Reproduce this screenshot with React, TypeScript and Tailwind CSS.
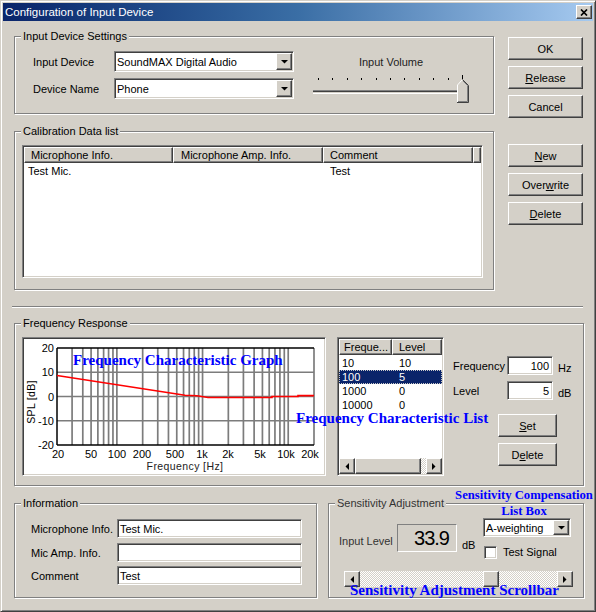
import type { ReactNode } from "react";

const raised =
  "border border-t-white border-l-white border-r-[#404040] border-b-[#404040] shadow-[inset_-1px_-1px_0_#808080]";
const sunken =
  "border border-t-[#808080] border-l-[#808080] border-r-white border-b-white shadow-[inset_1px_1px_0_#404040,inset_-1px_-1px_0_#d4d0c8]";
const etched = "m-0 min-w-0 p-0 border border-[#808080] shadow-[1px_1px_0_#fff,inset_1px_1px_0_#fff]";
const dither =
  "bg-[image:repeating-conic-gradient(#ffffff_0%_25%,#d4d0c8_0%_50%)] bg-[length:2px_2px]";

function Legend({ children }: { children: ReactNode }) {
  return <legend className="ml-[6px] h-[14px] bg-[#d4d0c8] px-[2px] leading-[14px]">{children}</legend>;
}

function Btn({ children, className = "" }: { children: ReactNode; className?: string }) {
  return (
    <button
      type="button"
      className={`flex h-[23px] items-center justify-center bg-[#d4d0c8] ${raised} ${className}`}
    >
      {children}
    </button>
  );
}

function DownArrow() {
  return (
    <svg width="7" height="4" viewBox="0 0 7 4">
      <polygon points="0,0 7,0 3.5,3.5" fill="#000" />
    </svg>
  );
}

function Combo({ value, className = "" }: { value: string; className?: string }) {
  return (
    <div className={`flex items-center bg-white p-px ${sunken} ${className}`}>
      <span className="flex-1 truncate pl-[1px]">{value}</span>
      <span className={`flex h-full w-[16px] items-center justify-center bg-[#d4d0c8] ${raised}`}>
        <DownArrow />
      </span>
    </div>
  );
}

function ArrowBtn({ dir }: { dir: "left" | "right" }) {
  return (
    <span className={`flex h-full w-[16px] shrink-0 items-center justify-center bg-[#d4d0c8] ${raised}`}>
      <svg width="4" height="7" viewBox="0 0 4 7">
        <polygon points={dir === "left" ? "4,0 4,7 0.5,3.5" : "0,0 0,7 3.5,3.5"} fill="#000" />
      </svg>
    </span>
  );
}

function Field({ value, className = "", right = false }: { value: string; className?: string; right?: boolean }) {
  return (
    <div
      className={`flex h-[19px] items-center bg-white px-[2px] ${sunken} ${right ? "justify-end pr-[3px]" : ""} ${className}`}
    >
      {value}
    </div>
  );
}

const FX = (f: number) => 33 + Math.log10(f / 20) * (257 / 3);
const GY = (db: number) => 9 + (20 - db) * (97 / 40);

const gridFreqs = [
  30, 40, 50, 60, 70, 80, 90, 100, 200, 300, 400, 500, 600, 700, 800, 900, 1000, 2000, 3000, 4000, 5000,
  6000, 7000, 8000, 9000, 10000, 20000,
];

const xLabels: [number, string][] = [
  [34, "20"],
  [67, "50"],
  [93, "100"],
  [118, "200"],
  [151, "500"],
  [178, "1k"],
  [204, "2k"],
  [236, "5k"],
  [262, "10k"],
  [286, "20k"],
];

function Graph() {
  const curve = "33,36.5 161,56.3 173,56.8 184,58.5 248,58.5 248,57.5 274,57.5 274,56.6 290,56.6";
  return (
    <svg width="300" height="135" viewBox="0 0 300 135" className="font-['Liberation_Sans',Arial,sans-serif]">
      {gridFreqs.map((f) => (
        <line key={f} x1={FX(f)} x2={FX(f)} y1={9} y2={106} stroke="#7c7c7c" strokeWidth={1.7} />
      ))}
      {[10, 0, -10].map((d) => (
        <line key={d} x1={33} x2={290} y1={GY(d)} y2={GY(d)} stroke="#7c7c7c" strokeWidth={1.6} />
      ))}
      <line x1={33} x2={290} y1={9} y2={9} stroke="#000" strokeWidth={1.5} />
      <line x1={33} x2={290} y1={106} y2={106} stroke="#000" strokeWidth={1.5} />
      <line x1={33} x2={33} y1={9} y2={106} stroke="#000" strokeWidth={1.5} />
      <polyline points={curve} fill="none" stroke="#ff0000" strokeWidth={1.6} />
      {[20, 10, 0, -10, -20].map((d) => (
        <text key={d} x={30} y={GY(d) + 4} fontSize="11" textAnchor="end" fill="#000">
          {d}
        </text>
      ))}
      {xLabels.map(([x, t]) => (
        <text key={t} x={x} y={119} fontSize="11" textAnchor="middle" fill="#000">
          {t}
        </text>
      ))}
      <text x={161} y={131} fontSize="10.5" textAnchor="middle" fill="#222" letterSpacing="0.4">
        Frequency [Hz]
      </text>
      <text
        x={11}
        y={63}
        fontSize="10.5"
        textAnchor="middle"
        fill="#000"
        letterSpacing="0.3"
        transform="rotate(-90 11 63)"
      >
        SPL [dB]
      </text>
    </svg>
  );
}

function VolumeSlider() {
  const ticks = Array.from({ length: 11 }, (_, i) => Math.round(5 + i * 14.4));
  return (
    <svg width="156" height="28" viewBox="0 0 156 28">
      {ticks.map((x, i) => (
        <rect key={x} x={x} y={i === 10 ? 0 : 3} width={1} height={i === 10 ? 5 : 2} fill="#000" />
      ))}
      <rect x={0} y={15} width={153} height={1} fill="#808080" />
      <rect x={0} y={16} width={153} height={1} fill="#404040" />
      <rect x={0} y={18} width={153} height={1} fill="#ffffff" />
      <polygon points="144,10 149.5,4 155,10 155,27 144,27" fill="#d4d0c8" />
      <polyline points="144.5,27 144.5,10 149.5,4.5" fill="none" stroke="#fff" strokeWidth={1} />
      <polyline points="149.5,4.5 155.5,10.5 155.5,27.5 144,27.5" fill="none" stroke="#404040" strokeWidth={1} />
      <polyline points="150,6 154.5,10.5 154.5,26.5 145,26.5" fill="none" stroke="#808080" strokeWidth={1} />
    </svg>
  );
}

function CloseGlyph() {
  return (
    <svg width="8" height="7" viewBox="0 0 8 7">
      <path d="M1 0.5 L7 6.5 M7 0.5 L1 6.5" stroke="#000" strokeWidth={1.7} />
    </svg>
  );
}

export default function App() {
  return (
    <div className="relative h-[612px] w-[596px] border border-t-[#d4d0c8] border-l-[#d4d0c8] border-r-[#404040] border-b-[#404040] bg-[#d4d0c8] p-[2px] font-['Liberation_Sans',Arial,sans-serif] text-[11px] leading-[14px] text-black shadow-[inset_1px_1px_0_#fff,inset_-1px_-1px_0_#808080]">
      {/* TITLE BAR */}
      <div className="flex h-[18px] items-center justify-between bg-linear-to-r from-[#0a246a] via-[#3a6ea5] to-[#a6caf0] pl-[2px] pr-[1px]">
        <span className="text-[11.5px] text-white">Configuration of Input Device</span>
        <span className={`flex h-[14px] w-[16px] items-center justify-center bg-[#d4d0c8] ${raised}`}>
          <CloseGlyph />
        </span>
      </div>

      {/* INPUT DEVICE SETTINGS */}
      <div className="ml-[11px] mt-[8px] flex h-[85px] items-start">
        <fieldset className={`h-[85px] w-[480px] ${etched}`}>
          <Legend>Input Device Settings</Legend>
          <div className="flex">
            <div className="ml-[18px] mt-[8px] flex flex-col gap-[6px]">
              <div className="flex items-center">
                <span className="w-[81px]">Input Device</span>
                <Combo value="SoundMAX Digital Audio" className="h-[21px] w-[180px]" />
              </div>
              <div className="flex items-center">
                <span className="w-[81px]">Device Name</span>
                <Combo value="Phone" className="h-[21px] w-[180px]" />
              </div>
            </div>
            <div className="ml-[19px] mt-[12px] flex w-[156px] flex-col items-center">
              <span className="text-[#222]">Input Volume</span>
              <div className="mt-[6px]">
                <VolumeSlider />
              </div>
            </div>
          </div>
        </fieldset>
        <div className="ml-[14px] mt-[8px] flex flex-col gap-[6px]">
          <Btn className="w-[75px]">OK</Btn>
          <Btn className="w-[75px]">
            <span>
              <u>R</u>elease
            </span>
          </Btn>
          <Btn className="w-[75px]">Cancel</Btn>
        </div>
      </div>

      {/* CALIBRATION DATA LIST */}
      <div className="ml-[11px] mt-[10px] flex h-[166px] items-start">
        <fieldset className={`h-[166px] w-[480px] ${etched}`}>
          <Legend>Calibration Data list</Legend>
          <div className={`ml-[7px] mt-[7px] flex h-[133px] w-[461px] flex-col bg-white p-px ${sunken}`}>
            <div className="flex h-[16px] shrink-0">
              <div className={`flex w-[149px] items-center bg-[#d4d0c8] pl-[6px] ${raised}`}>Microphone Info.</div>
              <div className={`flex w-[150px] items-center bg-[#d4d0c8] pl-[7px] ${raised}`}>Microphone Amp. Info.</div>
              <div className={`flex w-[150px] items-center bg-[#d4d0c8] pl-[6px] ${raised}`}>Comment</div>
              <div className={`flex-1 bg-[#d4d0c8] ${raised}`} />
            </div>
            <div className="flex h-[16px] items-center">
              <span className="w-[149px] pl-[4px]">Test Mic.</span>
              <span className="w-[150px]" />
              <span className="pl-[7px]">Test</span>
            </div>
          </div>
        </fieldset>
        <div className="ml-[14px] mt-[20px] flex flex-col gap-[6px]">
          <Btn className="w-[75px]">
            <span>
              <u>N</u>ew
            </span>
          </Btn>
          <Btn className="w-[75px]">
            <span>
              Over<u>w</u>rite
            </span>
          </Btn>
          <Btn className="w-[75px]">
            <span>
              <u>D</u>elete
            </span>
          </Btn>
        </div>
      </div>

      {/* SEPARATOR */}
      <div className="ml-[9px] mt-[16px] h-[2px] w-[571px] border-t border-b border-t-[#808080] border-b-white" />

      {/* FREQUENCY RESPONSE */}
      <fieldset className={`ml-[11px] mt-[8px] h-[170px] w-[570px] ${etched}`}>
        <Legend>Frequency Response</Legend>
        <div className="ml-[7px] mt-[7px] flex items-start">
          <div className={`h-[139px] w-[304px] bg-white p-px ${sunken}`}>
            <Graph />
          </div>

          <div className={`ml-[11px] flex h-[139px] w-[107px] flex-col bg-white p-px ${sunken}`}>
            <div className="flex h-[16px] shrink-0">
              <div className={`flex w-[53px] items-center bg-[#d4d0c8] pl-[4px] ${raised}`}>Freque...</div>
              <div className={`flex w-[50px] items-center bg-[#d4d0c8] pl-[6px] ${raised}`}>Level</div>
            </div>
            <div className="flex-1 pt-px">
              {[
                ["10", "10", false],
                ["100", "5", true],
                ["1000", "0", false],
                ["10000", "0", false],
              ].map(([f, l, sel]) => (
                <div
                  key={f as string}
                  className={`flex h-[14px] items-center ${
                    sel ? "bg-[#0a246a] text-white outline-1 -outline-offset-1 outline-dotted outline-[#c8c8c8]" : ""
                  }`}
                >
                  <span className="w-[53px] pl-[3px]">{f}</span>
                  <span className="pl-[7px]">{l}</span>
                </div>
              ))}
            </div>
            <div className="flex h-[16px] shrink-0">
              <ArrowBtn dir="left" />
              <span className={`h-full w-[66px] bg-[#d4d0c8] ${raised}`} />
              <span className={`h-full flex-1 ${dither}`} />
              <ArrowBtn dir="right" />
            </div>
          </div>

          <div className="ml-[9px] mt-[19px] flex flex-col">
            <div className="flex h-[19px] items-center">
              <span className="w-[54px]">Frequency</span>
              <Field value="100" right className="w-[46px]" />
              <span className="ml-[5px] mt-[5px]">Hz</span>
            </div>
            <div className="mt-[6px] flex h-[19px] items-center">
              <span className="w-[54px]">Level</span>
              <Field value="5" right className="w-[46px]" />
              <span className="ml-[5px] mt-[5px]">dB</span>
            </div>
            <Btn className="ml-[45px] mt-[14px] w-[59px]">
              <span>
                <u>S</u>et
              </span>
            </Btn>
            <Btn className="ml-[45px] mt-[6px] w-[59px]">
              <span>
                D<u>e</u>lete
              </span>
            </Btn>
          </div>
        </div>
      </fieldset>

      {/* BOTTOM ROW */}
      <div className="ml-[11px] mt-[10px] flex gap-[11px]">
        <fieldset className={`h-[102px] w-[303px] ${etched}`}>
          <Legend>Information</Legend>
          <div className="ml-[16px] mt-[9px] flex flex-col">
            <div className="flex items-center">
              <span className="w-[86px]">Microphone Info.</span>
              <Field value="Test Mic." className="w-[185px]" />
            </div>
            <div className="mt-[5px] flex items-center">
              <span className="w-[86px]">Mic Amp. Info.</span>
              <Field value="" className="w-[185px]" />
            </div>
            <div className="mt-[4px] flex items-center">
              <span className="w-[86px]">Comment</span>
              <Field value="Test" className="w-[185px]" />
            </div>
          </div>
        </fieldset>

        <fieldset className={`h-[102px] w-[256px] ${etched}`}>
          <Legend>
            <span className="text-[#333]">Sensitivity Adjustment</span>
          </Legend>
          <div className="ml-[10px] flex">
            <div className="mt-[14px] flex h-[28px] w-[144px] items-center">
              <span className="mt-[6px] w-[58px] text-[#333]">Input Level</span>
              <div className="flex h-[28px] w-[60px] items-center justify-end border border-t-[#808080] border-l-[#808080] border-r-white border-b-white pr-[7px] text-[20px] leading-none tracking-[-1px]">
                33.9
              </div>
              <span className="ml-[5px] self-end">dB</span>
            </div>
            <div className="mt-[8px] flex flex-col">
              <Combo value="A-weighting" className="h-[19px] w-[88px]" />
              <div className="ml-px mt-[8px] flex items-center">
                <span className={`h-[13px] w-[13px] bg-white ${sunken}`} />
                <span className="ml-[6px]">Test Signal</span>
              </div>
            </div>
          </div>
          <div className="ml-[15px] mt-[12px] flex h-[16px] w-[229px]">
            <ArrowBtn dir="left" />
            <span className={`h-full w-[123px] ${dither}`} />
            <span className={`h-full w-[16px] bg-[#d4d0c8] ${raised}`} />
            <span className={`h-full flex-1 ${dither}`} />
            <ArrowBtn dir="right" />
          </div>
        </fieldset>
      </div>

      {/* ANNOTATIONS */}
      <span className="pointer-events-none absolute left-[72px] top-[352px] whitespace-nowrap font-['Liberation_Serif','Times_New_Roman',serif] text-[15px] font-bold leading-[15px] text-[#0000ff]">
        Frequency Characteristic Graph
      </span>
      <span className="pointer-events-none absolute left-[295px] top-[410px] whitespace-nowrap font-['Liberation_Serif','Times_New_Roman',serif] text-[15px] font-bold leading-[15px] text-[#0000ff]">
        Frequency Characteristic List
      </span>
      <div className="pointer-events-none absolute left-[452px] top-[486px] w-[142px] text-center font-['Liberation_Serif','Times_New_Roman',serif] text-[12.7px] font-bold leading-[16px] text-[#0000ff]">
        <div className="whitespace-nowrap">Sensitivity Compensation</div>
        <div>List Box</div>
      </div>
      <span className="pointer-events-none absolute left-[349px] top-[582px] whitespace-nowrap font-['Liberation_Serif','Times_New_Roman',serif] text-[15px] font-bold leading-[15px] text-[#0000ff]">
        Sensitivity Adjustment Scrollbar
      </span>
    </div>
  );
}
